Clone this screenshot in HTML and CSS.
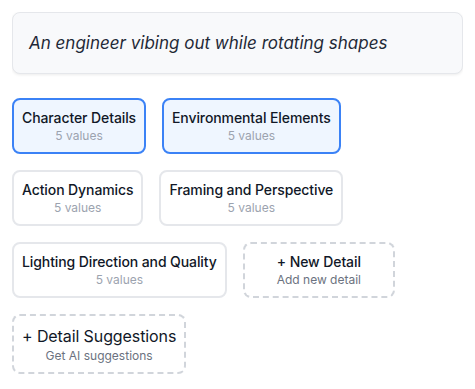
FILE: index.html
```html
<!DOCTYPE html>
<html lang="en">
<head>
  <meta charset="UTF-8">
  <title>Prompt Details</title>
  <meta name="viewport" content="width=device-width, initial-scale=1">
  <link rel="stylesheet" href="styles.css">
</head>
<body>

<!-- PROMPT -->
<div class="prompt-card">
  <p class="prompt-text">An engineer vibing out while rotating shapes</p>
</div>

<!-- DETAILS -->
<div class="detail-list">
  <button class="detail selected">
    <span class="detail-title">Character Details</span>
    <span class="detail-sub">5 values</span>
  </button>
  <button class="detail selected">
    <span class="detail-title">Environmental Elements</span>
    <span class="detail-sub">5 values</span>
  </button>
  <button class="detail">
    <span class="detail-title">Action Dynamics</span>
    <span class="detail-sub">5 values</span>
  </button>
  <button class="detail">
    <span class="detail-title">Framing and Perspective</span>
    <span class="detail-sub">5 values</span>
  </button>
  <button class="detail">
    <span class="detail-title">Lighting Direction and Quality</span>
    <span class="detail-sub">5 values</span>
  </button>
  <button class="detail add">
    <span class="detail-title">+ New Detail</span>
    <span class="detail-sub">Add new detail</span>
  </button>
  <button class="detail add big">
    <span class="detail-title">+ Detail Suggestions</span>
    <span class="detail-sub">Get AI suggestions</span>
  </button>
</div>

</body>
</html>
```

FILE: styles.css
```css
body {
  margin: 12px;
  font-family: Inter, "Noto Sans", sans-serif;
  background-color: #ffffff;
  color: #111827;
}

.prompt-card {
  background-color: #f8f9fb;
  border: 1px solid #e5e7eb;
  border-radius: 8px;
  box-shadow: 0 1px 3px rgba(0, 0, 0, 0.08);
  padding: 16px;
  margin-bottom: 24px;
}

.prompt-text {
  margin: 0;
  font-size: 17px;
  line-height: 28px;
  font-style: italic;
  color: #1f2937;
}

.detail-list {
  display: flex;
  flex-wrap: wrap;
  align-items: flex-start;
  gap: 16px;
}

.detail {
  display: flex;
  flex-direction: column;
  align-items: center;
  padding: 8px;
  background: #ffffff;
  border: 2px solid #e5e7eb;
  border-radius: 8px;
  font-family: inherit;
  cursor: pointer;
}

.detail.selected {
  background-color: #eff6ff;
  border-color: #3b82f6;
}

.detail.add {
  border: 2px dashed #d1d5db;
  padding-left: 32px;
  padding-right: 32px;
}

.detail.big {
  padding-left: 8px;
  padding-right: 8px;
}

.detail-title {
  font-size: 14px;
  line-height: 20px;
  font-weight: 500;
  letter-spacing: -0.1px;
  color: #111827;
}

.detail.big .detail-title {
  font-size: 16px;
  line-height: 24px;
  font-weight: 400;
}

.detail-sub {
  font-size: 12px;
  line-height: 16px;
  color: #9ca3af;
}

.detail.add .detail-sub {
  color: #6b7280;
}
```
